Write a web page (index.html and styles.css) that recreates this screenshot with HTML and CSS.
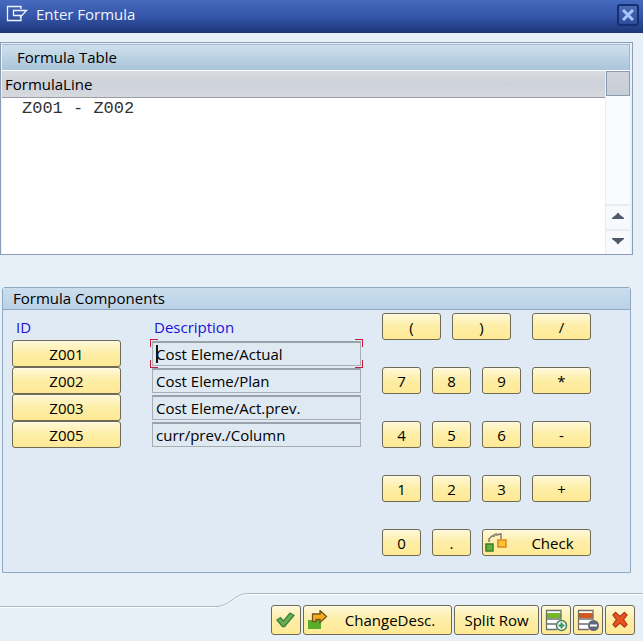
FILE: index.html
```
<!DOCTYPE html>
<html lang="en">
<head>
    <meta charset="UTF-8">
    <meta name="viewport" content="width=device-width, initial-scale=1.0">
    <title>Enter Formula</title>
    <link rel="stylesheet" href="styles.css">
</head>
<body>
    <header class="titlebar">
        <svg class="title-icon" width="22" height="18" viewBox="0 0 22 18" fill="none" stroke="#eef4ff" stroke-width="1.3">
            <path d="M15 4V1.500H1.500V15.500H15V12"/>
            <path d="M7.500 5.500H20.500L14.500 12V10.500H7.500Z"/>
        </svg>
        <h1>Enter Formula</h1>
        <button type="button" class="close" aria-label="Close">
            <svg width="12" height="12" viewBox="0 0 12 12" stroke="#a9c5ff" stroke-width="3">
                <path d="M1 1L11 11M11 1L1 11"/>
            </svg>
        </button>
    </header>

    <main>
        <section class="formula">
            <h2>Formula Table</h2>
            <div class="formula-body">
                <table class="lines">
                    <thead>
                        <tr><th>FormulaLine</th></tr>
                    </thead>
                    <tbody>
                        <tr><td>Z001 - Z002</td></tr>
                    </tbody>
                </table>
                <div class="scroll">
                    <div class="scroll-head"></div>
                    <div class="scroll-track"></div>
                    <button type="button" aria-label="Scroll up">
                        <svg width="12" height="6" viewBox="0 0 12 6" fill="#4d5a6b"><path d="M0 6V5L5 1V0H7V1L12 5V6Z"/></svg>
                    </button>
                    <button type="button" aria-label="Scroll down">
                        <svg width="12" height="6" viewBox="0 0 12 6" fill="#4d5a6b"><path d="M0 0V1L5 5V6H7V5L12 1V0Z"/></svg>
                    </button>
                </div>
            </div>
        </section>

        <section class="components">
            <h2>Formula Components</h2>
            <div class="components-body">
                <table class="ids">
                    <thead>
                        <tr><th>ID</th><th id="desc">Description</th></tr>
                    </thead>
                    <tbody>
                        <tr>
                            <td><button type="button" class="btn">Z001</button></td>
                            <td><div class="field focused"><input type="text" aria-labelledby="desc" value="Cost Eleme/Actual" readonly></div></td>
                        </tr>
                        <tr>
                            <td><button type="button" class="btn">Z002</button></td>
                            <td><div class="field"><input type="text" aria-labelledby="desc" value="Cost Eleme/Plan" readonly></div></td>
                        </tr>
                        <tr>
                            <td><button type="button" class="btn">Z003</button></td>
                            <td><div class="field"><input type="text" aria-labelledby="desc" value="Cost Eleme/Act.prev." readonly></div></td>
                        </tr>
                        <tr>
                            <td><button type="button" class="btn">Z005</button></td>
                            <td><div class="field"><input type="text" aria-labelledby="desc" value="curr/prev./Column" readonly></div></td>
                        </tr>
                    </tbody>
                </table>

                <div class="keypad">
                    <div class="brackets">
                        <button type="button" class="btn">(</button>
                        <button type="button" class="btn">)</button>
                    </div>
                    <button type="button" class="btn">/</button>
                    <button type="button" class="btn">7</button>
                    <button type="button" class="btn">8</button>
                    <button type="button" class="btn">9</button>
                    <button type="button" class="btn">*</button>
                    <button type="button" class="btn">4</button>
                    <button type="button" class="btn">5</button>
                    <button type="button" class="btn">6</button>
                    <button type="button" class="btn">-</button>
                    <button type="button" class="btn">1</button>
                    <button type="button" class="btn">2</button>
                    <button type="button" class="btn">3</button>
                    <button type="button" class="btn">+</button>
                    <button type="button" class="btn">0</button>
                    <button type="button" class="btn">.</button>
                    <button type="button" class="btn check">
                        <svg width="22" height="20" viewBox="0 0 22 20">
                            <path d="M4 9V6L7 3H9M9 1V4M11 0V3M12 2L15 1H16V6" fill="none" stroke="#77766a" stroke-width="1.4"/>
                            <rect x="1" y="11" width="7" height="7" fill="#62b23c" stroke="#3d7a2a" stroke-width="1.5"/>
                            <rect x="13" y="7" width="8" height="7" fill="#ffc234" stroke="#dd861c" stroke-width="1.5"/>
                        </svg>
                        <span>Check</span>
                    </button>
                </div>
            </div>
        </section>
    </main>

    <footer>
        <div class="rule"></div>
        <svg class="curve" width="32" height="14" viewBox="0 0 32 14" fill="none">
            <path d="M0 14.500C14 14.500 18 1.500 32 1.500" stroke="#fff"/>
            <path d="M0 13.500C14 13.500 18 .5 32 .5" stroke="#adb8c2"/>
        </svg>
        <div class="actions">
            <button type="button" class="btn icon" aria-label="Continue">
                <svg width="20" height="18" viewBox="0 0 20 18">
                    <path d="M1 9L4.500 6.500L7.500 10L14 2L18 4.500L8.500 15.500H6.500Z" fill="#66ae50" stroke="#3c8045" stroke-width="1.3"/>
                </svg>
            </button>
            <button type="button" class="btn change">
                <svg width="22" height="20" viewBox="0 0 22 20">
                    <rect x="1" y="10" width="13" height="9" fill="#59ad2b"/>
                    <path d="M5.500 11.500V4H13V.5L19.500 6.500L13 12.500V9.500H9V11.500Z" fill="#f9ac1c" stroke="#70561f" stroke-width="1.3"/>
                </svg>
                <span>ChangeDesc.</span>
            </button>
            <button type="button" class="btn split">Split Row</button>
            <button type="button" class="btn icon" aria-label="Insert row">
                <svg width="24" height="24" viewBox="0 0 24 24">
                    <path d="M2 2H17V21H2Z" fill="#fff"/>
                    <path d="M2 5H17V10H2Z" fill="#74b52c"/>
                    <path d="M2 2.500H17V11H2.500M2.500 2V21.500H13M2.500 16H12" fill="none" stroke="#69736c" stroke-width="1.3"/>
                    <circle cx="17.500" cy="17.500" r="5" fill="#fff" stroke="#43805f" stroke-width="1.5"/>
                    <path d="M14.500 17.500H20.500M17.500 14.500V20.500" stroke="#31915b" stroke-width="2"/>
                </svg>
            </button>
            <button type="button" class="btn icon" aria-label="Delete row">
                <svg width="24" height="24" viewBox="0 0 24 24">
                    <path d="M2 2H17V21H2Z" fill="#fff"/>
                    <path d="M2 5H17V10H2Z" fill="#d05a20"/>
                    <path d="M2 2.500H17V11H2.500M2.500 2V21.500H13M2.500 16H12" fill="none" stroke="#756d69" stroke-width="1.3"/>
                    <circle cx="17.500" cy="17.500" r="5.500" fill="#626478"/>
                    <path d="M14 17.500H21" stroke="#fff" stroke-width="2"/>
                </svg>
            </button>
            <button type="button" class="btn icon" aria-label="Cancel">
                <svg width="18" height="18" viewBox="0 0 18 18">
                    <path d="M2 4L4.500 1.500L9 5.500L13.500 1.500L16 4L12.500 8.500L16 13.500L13.500 16L9 12L4.500 16L2 13.500L5.500 8.500Z" fill="#e8561f" stroke="#b53a20" stroke-width="1.3"/>
                </svg>
            </button>
        </div>
    </footer>
</body>
</html>
```

FILE: styles.css
```
*{
    margin:0px;
    padding:0px;
    box-sizing:border-box;
}
body{
    min-height:100vh;
    display:flex;
    flex-direction:column;
    background-color:#e7eff7;
    color:#000;
    font-family:"Open Sans", "Noto Sans", sans-serif;
    font-size:15px;
    line-height:20px;
}
h1,h2,th{
    font-size:15px;
    font-weight:normal;
    text-align:left;
}
button,input{
    font:inherit;
    color:inherit;
}
svg{
    display:block;
    flex:none;
}

/* title bar */
.titlebar{
    display:flex;
    align-items:flex-start;
    height:33px;
    padding:4px 4px 0 6px;
    background:linear-gradient(#466abe, #3455a8 50%, #1c3778);
    color:#eef4ff;
}
.title-icon{
    margin-top:1px;
}
.titlebar h1{
    flex:1;
    margin-left:8px;
}
.close{
    display:flex;
    align-items:center;
    justify-content:center;
    width:22px;
    height:22px;
    border:2px solid #142f72;
    border-radius:3px;
    background:linear-gradient(#4c6cb8, #2d4b96);
}

main{
    padding:9px 10px 0 0;
}

/* formula table */
.formula{
    border:1px solid #8c9db8;
    background-color:#e9f1f8;
    padding:1px 2px 0 1px;
}
.formula h2{
    height:26px;
    padding:0 15px;
    line-height:24px;
    border-top:1px solid #a4b5cc;
    border-right:1px solid #a4b5cc;
    background:linear-gradient(#cfe0ec, #a9c4da);
}
.formula-body{
    display:flex;
    height:184px;
    padding-top:1px;
    background-color:#fff;
}
.lines{
    flex:1;
    align-self:flex-start;
    border-collapse:collapse;
}
.lines th{
    height:26px;
    padding:0 3px;
    border-bottom:1px solid #9b9da6;
    background:linear-gradient(#d9dbe0, #cdd1da 50%, #d7d9df);
}
.lines td{
    height:24px;
    padding-left:20px;
    color:#333;
    font-family:"Liberation Mono", monospace;
    font-size:17px;
}
.scroll{
    display:flex;
    flex-direction:column;
    width:25px;
    border-left:1px solid #e6edf4;
    background-color:#f9fbfd;
}
.scroll-head{
    height:25px;
    border:1px solid #8c9cae;
    background:linear-gradient(#d0d5db, #c5cdd6);
}
.scroll-track{
    flex:1;
}
.scroll button{
    display:flex;
    align-items:center;
    justify-content:center;
    height:25px;
    padding-bottom:4px;
    border:0;
    border-top:2px solid #e9edf3;
    background-color:#f7f9fc;
}

/* formula components */
.components{
    margin:32px 2px 0;
    border:1px solid #8fa9c5;
    border-radius:3px 3px 0 0;
    background-color:#dfeaf5;
}
.components h2{
    height:22px;
    padding:0 10px;
    line-height:20px;
    border-bottom:1px solid #8fa9c5;
    background:linear-gradient(#cbdeee, #b9d1e7);
}
.components-body{
    display:flex;
    align-items:flex-start;
    padding:3px 9px 16px;
}
.ids{
    border-collapse:collapse;
}
.ids th{
    height:27px;
    padding:0 4px;
    color:#1a12d8;
}
.ids th + th{
    padding-left:33px;
}
.ids td + td{
    padding-left:31px;
}
.ids .btn{
    width:109px;
}
.btn{
    display:flex;
    align-items:center;
    justify-content:center;
    height:27px;
    border:1px solid #6e6a55;
    border-radius:3px;
    background:linear-gradient(#fff8d8, #fdeea6 50%, #ffe995);
    box-shadow:inset 0 1px 0 #fffbe8;
}
.field{
    position:relative;
}
.field input{
    display:block;
    width:209px;
    height:25px;
    padding:0 3px 1px;
    border:1px solid #a6adb3;
    border-top:2px solid #9aa3ab;
    background-color:#dfe9f2;
    outline:0;
}
/* red corner marks and text cursor of the active field */
.focused::before{
    content:"";
    position:absolute;
    inset:-2px;
    --c:linear-gradient(#c8193c, #c8193c);
    background:
        var(--c) 0 0/8px 1px, var(--c) 0 0/1px 8px,
        var(--c) 100% 0/8px 1px, var(--c) 100% 0/1px 8px,
        var(--c) 0 100%/8px 1px, var(--c) 0 100%/1px 8px,
        var(--c) 100% 100%/8px 1px, var(--c) 100% 100%/1px 8px;
    background-repeat:no-repeat;
    pointer-events:none;
    z-index:1;
}
.focused::after{
    content:"";
    position:absolute;
    left:4px;
    top:4px;
    width:2px;
    height:18px;
    background-color:#111;
}

/* keypad */
.keypad{
    display:grid;
    grid-template-columns:39px 39px 39px 59px;
    gap:27px 11px;
    margin-left:21px;
}
.brackets{
    display:flex;
    gap:11px;
    grid-column:span 3;
}
.brackets .btn{
    width:59px;
}
.check{
    grid-column:span 2;
    padding-left:2px;
}
.check span,.change span{
    flex:1;
    text-align:center;
}
.check span{
    padding-left:8px;
}

/* bottom bar */
footer{
    display:flex;
    align-items:flex-start;
    margin-top:20px;
}
.rule{
    flex:1;
    height:14px;
    border-bottom:1px solid #adb8c2;
    box-shadow:0 1px 0 #fff;
}
.actions{
    display:flex;
    gap:2px;
    padding:11px 8px 6px 23px;
    border-top:1px solid #adb8c2;
    box-shadow:inset 0 1px 0 #fff;
}
.actions .btn{
    height:30px;
}
.icon{
    width:30px;
}
.change{
    width:149px;
    padding-left:3px;
}
.split{
    width:85px;
}
```
